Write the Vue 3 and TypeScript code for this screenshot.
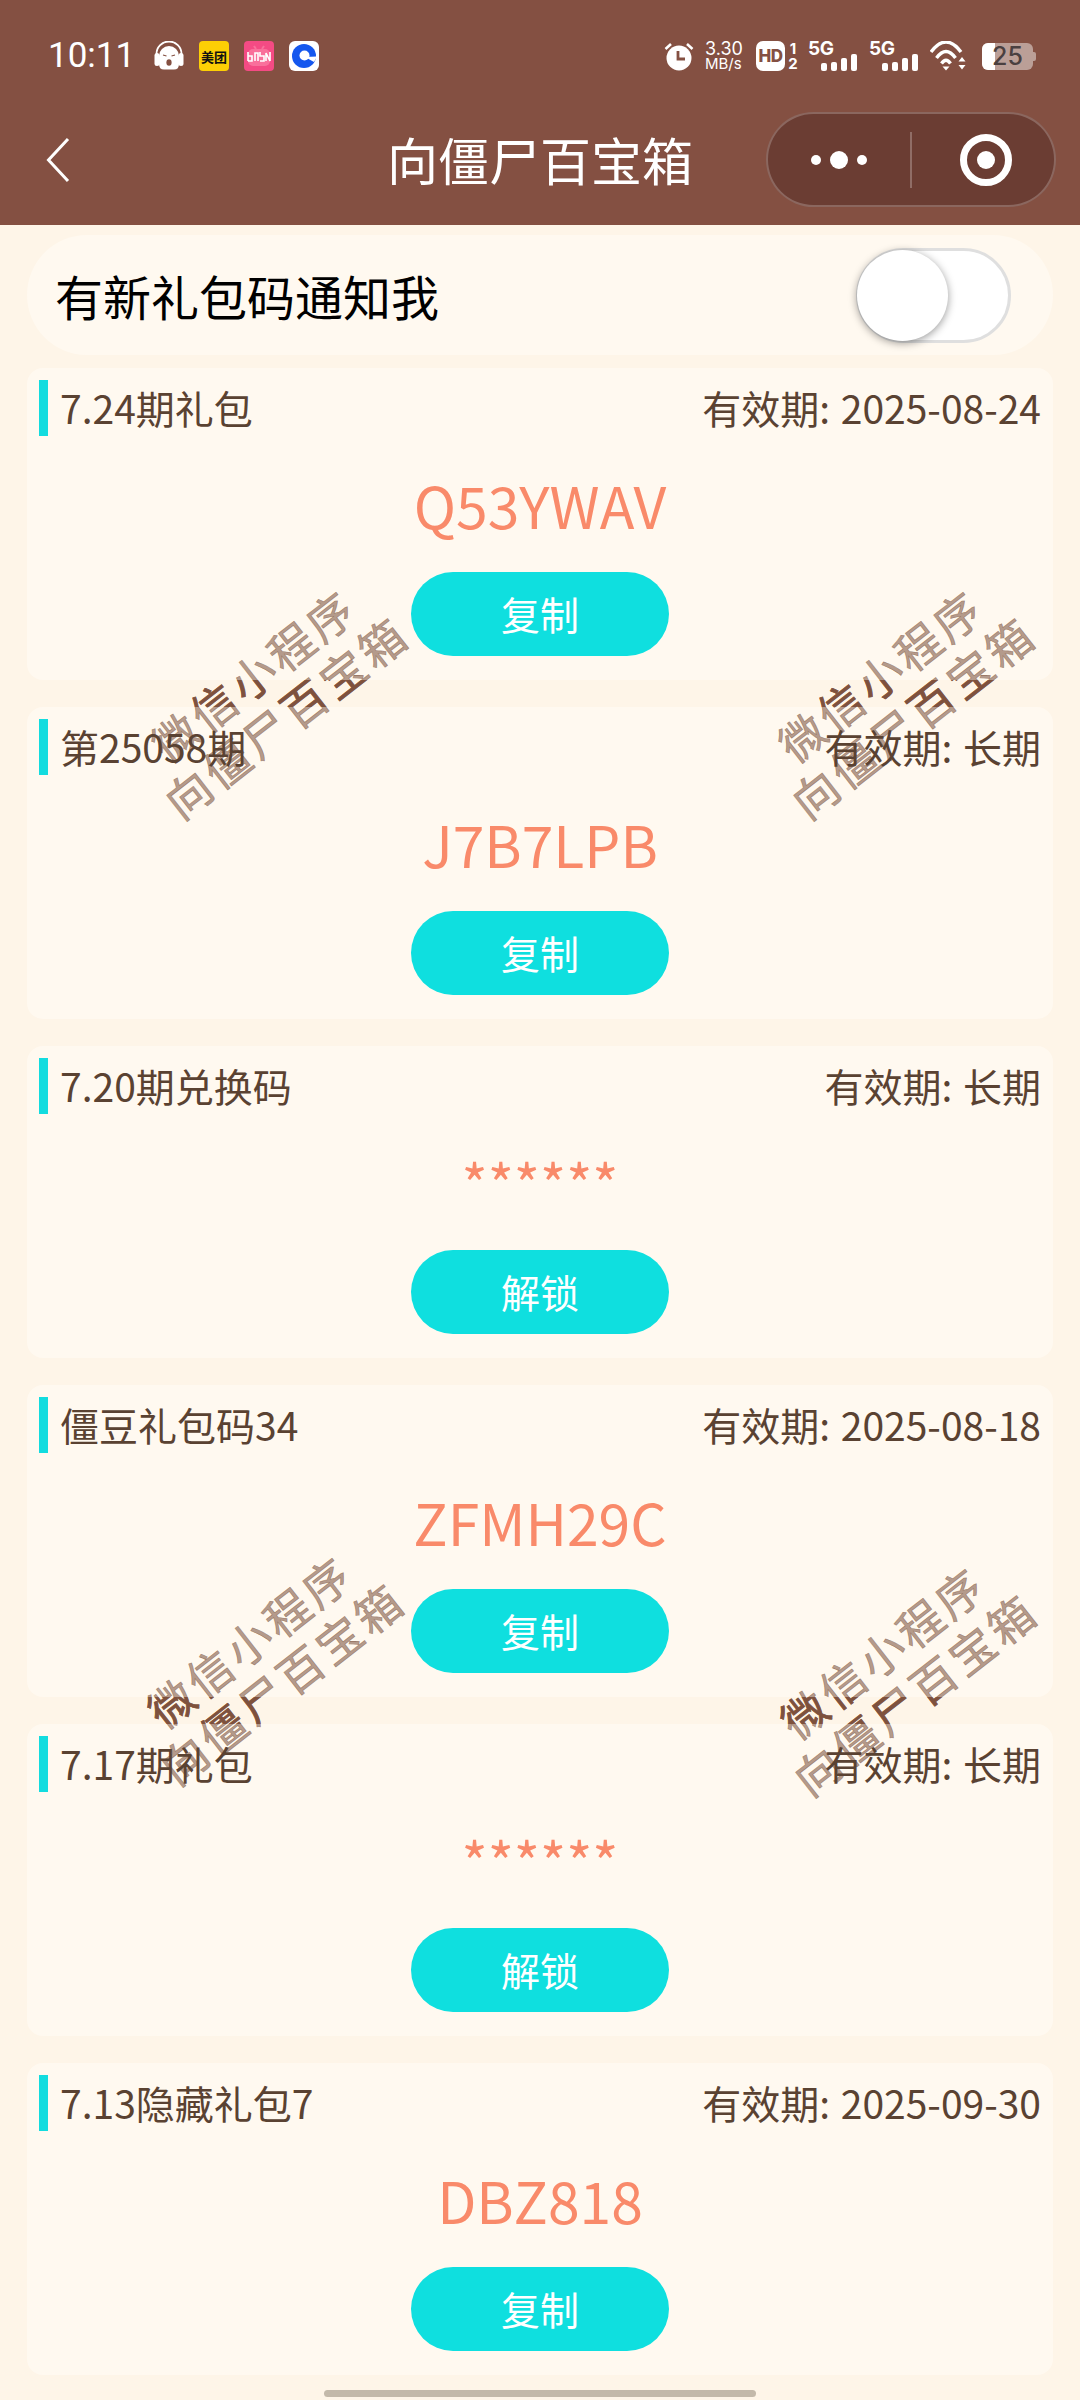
<script setup lang="ts">
interface Gift {
  title: string;
  expire: string;
  code: string;
  locked?: boolean;
}

const gifts: Gift[] = [
  { title: "7.24期礼包", expire: "2025-08-24", code: "Q53YWAV" },
  { title: "第25058期", expire: "长期", code: "J7B7LPB" },
  { title: "7.20期兑换码", expire: "长期", code: "******", locked: true },
  { title: "僵豆礼包码34", expire: "2025-08-18", code: "ZFMH29C" },
  { title: "7.17期礼包", expire: "长期", code: "******", locked: true },
  { title: "7.13隐藏礼包7", expire: "2025-09-30", code: "DBZ818" },
];

// 水印的位置 (中心点)
const marks = [
  { id: 1, x: 269, y: 695 },
  { id: 2, x: 896, y: 695 },
  { id: 3, x: 265, y: 1661 },
  { id: 4, x: 898, y: 1672 },
];
</script>

<template>
  <div class="page">
    <!-- 卡片下面的深色水印，只在卡片间隙露出来 -->
    <div
      v-for="m in marks"
      :key="'under' + m.id"
      class="mark mark-under"
      :style="{ left: m.x + 'px', top: m.y + 'px' }"
    >
      <div>微信小程序</div>
      <div>向僵尸百宝箱</div>
    </div>

    <header class="top">
      <div class="status">
        <span class="time">10:11</span>
        <div class="apps">
          <svg class="app" viewBox="0 0 30 30">
            <path d="M2.500 17 V13 A12.500 12.500 0 0 1 27.500 13 V17" fill="none" stroke="#fff" stroke-width="1.800" />
            <path d="M5 15 A10 10 0 0 1 25 15 V23 Q25 28.500 20 28.500 H10 Q5 28.500 5 23 Z" fill="#fff" />
            <rect x="0.500" y="12" width="5" height="13" rx="2.500" fill="#fff" />
            <rect x="24.500" y="12" width="5" height="13" rx="2.500" fill="#fff" />
            <path d="M9 14 L12.500 15 M17.500 15 L21 14" stroke="#845042" stroke-width="1.200" />
            <ellipse cx="15" cy="21.500" rx="2.600" ry="3.200" fill="#845042" />
          </svg>
          <div class="app meituan"><span>美团</span></div>
          <div class="app bili">
            <svg viewBox="0 0 30 30">
              <path d="M10 5 L12 8 M20 5 L18 8" stroke="#f9709b" stroke-width="2" />
              <rect x="4" y="8" width="22" height="17" rx="5" fill="#f9709b" />
              <path d="M4 20 V11 M4 20 H8 V15 H4 M11 20 V12 L14 12 V20 M16 20 H20 V15 H16 V11 M22 20 V12 L26 20 V11" fill="none" stroke="#fff" stroke-width="1.600" />
            </svg>
          </div>
          <div class="app blue">
            <svg viewBox="0 0 30 30">
              <circle cx="15" cy="15" r="12" fill="#1557ee" />
              <circle cx="15.500" cy="14.500" r="5" fill="#fff" />
              <path d="M16 16 L28 15.500 L25 21 Z" fill="#fff" />
            </svg>
          </div>
        </div>
        <div class="spacer"></div>
        <div class="sys">
          <svg class="alarm" viewBox="0 0 30 30">
            <circle cx="15" cy="17" r="12.500" fill="#fff" />
            <path d="M1.500 8 L7 3 M28.500 8 L23 3" stroke="#fff" stroke-width="2.600" />
            <path d="M14 10 V18 H21" fill="none" stroke="#845042" stroke-width="2.800" />
          </svg>
          <div class="speed"><span>3.30</span><span class="unit">MB/s</span></div>
          <div class="hd"><span>HD</span></div>
          <div class="sim"><span>1</span><span>2</span></div>
          <div class="signal">
            <span class="five">5G</span>
            <div class="bars"><i class="b1"></i><i class="b2"></i><i class="b3"></i><i class="b4"></i></div>
          </div>
          <div class="signal">
            <span class="five">5G</span>
            <div class="bars"><i class="b1"></i><i class="b2"></i><i class="b3"></i><i class="b4"></i></div>
          </div>
          <svg class="wifi" viewBox="0 0 36 30">
            <path d="M1 11 Q16 -9 31 11" fill="none" stroke="#fff" stroke-width="3.400" />
            <path d="M6.500 17 Q16 4 25.500 17" fill="none" stroke="#fff" stroke-width="3.400" />
            <path d="M11.500 22.500 Q16 16 20.500 22.500" fill="none" stroke="#fff" stroke-width="3.400" />
            <path d="M12.500 25.500 H19.500 L16 29.500 Z" fill="#fff" />
            <path d="M32 16 L35.500 20.500 H28.500 Z M28.500 24 H35.500 L32 28.500 Z" fill="#fff" />
          </svg>
          <div class="battery">
            <div class="level"></div>
            <span>25</span>
            <div class="cap"></div>
          </div>
        </div>
      </div>

      <div class="nav">
        <svg class="back" viewBox="0 0 24 46">
          <path d="M22 2 L2.500 23 L22 44" fill="none" stroke="#fff" stroke-width="3" />
        </svg>
        <span class="title">向僵尸百宝箱</span>
        <div class="capsule">
          <div class="cap-left">
            <i class="dot"></i><i class="dot big"></i><i class="dot"></i>
          </div>
          <div class="cap-line"></div>
          <div class="cap-right">
            <div class="record"><i></i></div>
          </div>
        </div>
      </div>
    </header>

    <main class="list">
      <div class="notice">
        <span>有新礼包码通知我</span>
        <div class="switch"><div class="knob"></div></div>
      </div>

      <div v-for="g in gifts" :key="g.title" class="card">
        <div class="card-head">
          <div class="card-title">{{ g.title }}</div>
          <div class="card-date">有效期: {{ g.expire }}</div>
        </div>
        <div class="code" :class="{ stars: g.locked }">{{ g.code }}</div>
        <div class="btn">{{ g.locked ? "解锁" : "复制" }}</div>
      </div>
    </main>

    <div class="home-bar"></div>

    <div
      v-for="m in marks"
      :key="'over' + m.id"
      class="mark mark-over"
      :style="{ left: m.x + 'px', top: m.y + 'px' }"
    >
      <div>微信小程序</div>
      <div>向僵尸百宝箱</div>
    </div>
  </div>
</template>

<style>
html,
body {
  margin: 0;
  background: #fef5e8;
}
</style>

<style scoped>
.page {
  position: relative;
  width: 1080px;
  height: 2400px;
  overflow: hidden;
  background: #fef5e8;
  font-family: "Noto Sans CJK SC", "Noto Sans", sans-serif;
}
.top {
  position: relative;
  height: 225px;
  background: #845042;
  color: #fff;
}

/* 状态栏 */
.status {
  display: flex;
  align-items: center;
  height: 112px;
  padding: 0 47px 0 48px;
  box-sizing: border-box;
}
.time {
  width: 106px;
  font-family: Roboto, sans-serif;
  font-size: 35px;
  line-height: 116px;
}
.apps {
  display: flex;
  gap: 15px;
}
.app {
  display: block;
  width: 30px;
  height: 30px;
  border-radius: 4px;
  overflow: hidden;
}
.app svg {
  display: block;
  width: 30px;
  height: 30px;
}
.meituan {
  display: flex;
  align-items: center;
  justify-content: center;
  background: #fdcf05;
  color: #111;
  font-size: 13px;
  font-weight: 700;
  white-space: nowrap;
}
.bili {
  background: #f44b84;
}
.blue {
  background: #fff;
  border-radius: 6px;
}
.spacer {
  flex: 1;
}
.sys {
  display: flex;
  align-items: center;
  height: 30px;
  font-family: Inter, sans-serif;
}
.alarm {
  width: 30px;
  height: 30px;
  margin-right: 11px;
}
.speed {
  display: flex;
  flex-direction: column;
  width: 40px;
  font-size: 18px;
  line-height: 15px;
  white-space: nowrap;
}
.speed .unit {
  font-size: 15px;
}
.hd {
  display: flex;
  align-items: center;
  justify-content: center;
  width: 29px;
  height: 30px;
  margin-left: 11px;
  border-radius: 7px;
  background: #fff;
  color: #845042;
  font-size: 17px;
  font-weight: 800;
  letter-spacing: -0.5px;
}
.sim {
  display: flex;
  flex-direction: column;
  align-items: center;
  width: 12px;
  margin-left: 2px;
  font-size: 15px;
  font-weight: 700;
  line-height: 15px;
}
.signal {
  position: relative;
  width: 49px;
  height: 30px;
  margin-left: 9px;
}
.signal + .signal {
  margin-left: 12px;
}
.five {
  position: absolute;
  left: 0;
  top: -1px;
  font-size: 19px;
  font-weight: 700;
  line-height: 18px;
  letter-spacing: -0.5px;
}
.bars {
  position: absolute;
  right: 0;
  bottom: 0;
  display: flex;
  align-items: flex-end;
  gap: 4px;
}
.bars i {
  display: block;
  width: 6px;
  background: #fff;
  border-radius: 2px;
}
.bars .b1 {
  height: 8px;
}
.bars .b2 {
  height: 9px;
}
.bars .b3 {
  height: 13px;
}
.bars .b4 {
  height: 17px;
}
.wifi {
  width: 36px;
  height: 30px;
  margin-left: 12px;
}
.battery {
  position: relative;
  width: 51px;
  height: 27px;
  margin-left: 16px;
  border-radius: 6px;
  background: rgba(255, 255, 255, 0.45);
  text-align: center;
  overflow: visible;
}
.level {
  position: absolute;
  left: 0;
  top: 0;
  bottom: 0;
  width: 13px;
  background: #fff;
  border-radius: 6px 0 0 6px;
}
.battery span {
  position: relative;
  display: block;
  color: #4a4040;
  font-size: 25px;
  font-weight: 500;
  line-height: 27px;
}
.cap {
  position: absolute;
  right: -3px;
  top: 9px;
  width: 3px;
  height: 9px;
  border-radius: 0 2px 2px 0;
  background: rgba(255, 255, 255, 0.45);
}

/* 导航栏 */
.nav {
  position: relative;
  display: flex;
  align-items: center;
  height: 95px;
  padding: 0 24px 0 46px;
}
.back {
  width: 24px;
  height: 46px;
}
.title {
  position: absolute;
  left: 0;
  right: 0;
  text-align: center;
  font-size: 51px;
  line-height: 95px;
  color: #fff;
}
.capsule {
  display: flex;
  align-items: center;
  width: 290px;
  height: 95px;
  margin-left: auto;
  box-sizing: border-box;
  border: 2px solid rgba(255, 255, 255, 0.22);
  border-radius: 48px;
  background: #6b3d33;
}
.cap-left {
  display: flex;
  align-items: center;
  justify-content: center;
  gap: 9px;
  width: 142px;
}
.dot {
  display: block;
  width: 10px;
  height: 10px;
  border-radius: 50%;
  background: #fff;
}
.dot.big {
  width: 18px;
  height: 18px;
}
.cap-line {
  width: 2px;
  height: 56px;
  background: rgba(255, 255, 255, 0.25);
}
.cap-right {
  display: flex;
  align-items: center;
  justify-content: center;
  flex: 1;
  padding-left: 6px;
}
.record {
  display: flex;
  align-items: center;
  justify-content: center;
  width: 52px;
  height: 52px;
  box-sizing: border-box;
  border: 7px solid #fff;
  border-radius: 50%;
}
.record i {
  display: block;
  width: 18px;
  height: 18px;
  border-radius: 50%;
  background: #fff;
}

/* 列表 */
.list {
  position: relative;
  display: flex;
  flex-direction: column;
  padding: 10px 27px 0;
}
.notice {
  display: flex;
  align-items: center;
  justify-content: space-between;
  height: 120px;
  margin-bottom: 13px;
  padding: 0 42px 0 28px;
  border-radius: 60px;
  background: #fff9f0;
  color: #000;
  font-size: 48px;
}
.switch {
  position: relative;
  width: 155px;
  height: 95px;
  box-sizing: border-box;
  border: 3px solid #dfdfdf;
  border-radius: 48px;
  background: #fff;
}
.knob {
  position: absolute;
  left: -2px;
  top: -1px;
  width: 91px;
  height: 91px;
  border-radius: 50%;
  background: #fff;
  box-shadow: 0 2px 8px rgba(0, 0, 0, 0.4);
}
.card {
  position: relative;
  height: 312px;
  margin-bottom: 27px;
  padding-top: 12px;
  box-sizing: border-box;
  border-radius: 16px;
  background: #fff9f0;
}
.card-head {
  position: relative;
  z-index: 2;
  display: flex;
  justify-content: space-between;
  height: 56px;
  padding-right: 12px;
  color: #5a4232;
  font-size: 39px;
  line-height: 54px;
}
.card-title {
  margin-left: 12px;
  padding-left: 12px;
  border-left: 9px solid #13dcdf;
  height: 56px;
}
.card-date {
  word-spacing: 2px;
}
.code {
  height: 136px;
  color: #f98a6a;
  font-size: 57px;
  line-height: 136px;
  text-align: center;
}
.code.stars {
  line-height: 136px;
  font-size: 56px;
}
.btn {
  width: 258px;
  height: 84px;
  margin: 0 auto;
  border-radius: 42px;
  background: #0fdfdf;
  color: #fff;
  font-size: 39px;
  line-height: 82px;
  text-align: center;
}

.home-bar {
  position: absolute;
  left: 324px;
  top: 2390px;
  width: 432px;
  height: 7px;
  border-radius: 4px;
  background: #c3b9aa;
}

/* 水印 */
.mark {
  position: absolute;
  transform: translate(-50%, -50%) rotate(-38deg);
  font-size: 45px;
  line-height: 53px;
  letter-spacing: 4px;
  text-align: center;
  white-space: nowrap;
  pointer-events: none;
  -webkit-text-stroke: 0.6px currentColor;
}
.mark-under {
  color: #7a4630;
}
.mark-over {
  color: rgba(130, 90, 70, 0.62);
  z-index: 1;
}
</style>
